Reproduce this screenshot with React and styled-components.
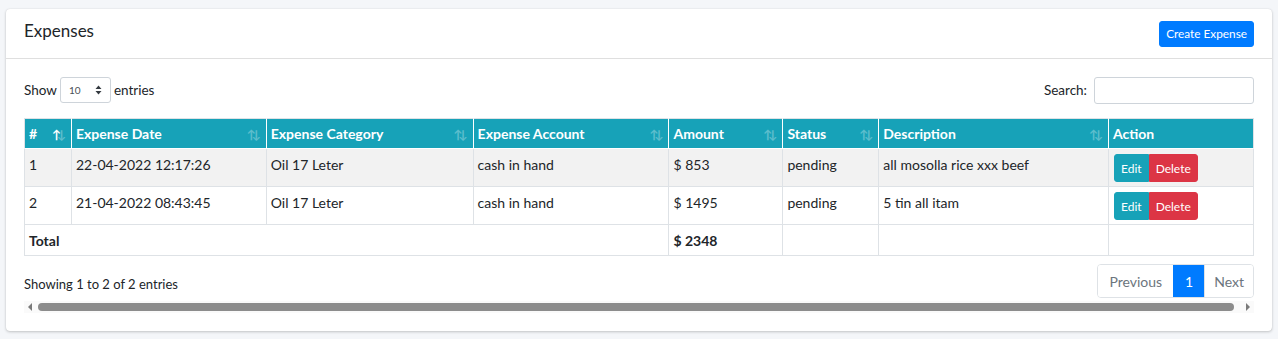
import React from "react";
import styled, { createGlobalStyle } from "styled-components";

const Global = createGlobalStyle`
  html, body { margin: 0; padding: 0; background: #f4f6f9; }
  body { font-family: Lato, "Noto Sans", sans-serif; color: #212529; font-size: 14px; }
  * { box-sizing: border-box; }
`;

const Page = styled.div`
  padding: 9px 6px 8px 6px;
`;

const Card = styled.div`
  background: #fff;
  border-radius: 4px;
  box-shadow: 0 0 1px rgba(0,0,0,.125), 0 1px 3px rgba(0,0,0,.2);
`;

const CardHeader = styled.div`
  height: 50px;
  display: flex;
  align-items: center;
  justify-content: space-between;
  padding: 0 18px;
  border-bottom: 1px solid rgba(0,0,0,.125);
`;

const Title = styled.h3`
  margin: 0;
  font-size: 17px;
  font-weight: 400;
  color: #212529;
  position: relative;
  top: -3px;
`;

const PrimaryButton = styled.button`
  background: #007bff;
  color: #fff;
  border: 1px solid #007bff;
  border-radius: 3px;
  height: 26px;
  padding: 0 6px;
  font-family: inherit;
  font-size: 11.8px;
`;

const CardBody = styled.div`
  padding: 18px 18px 18px 18px;
`;

const TopBar = styled.div`
  display: flex;
  justify-content: space-between;
  align-items: center;
  height: 26px;
  margin-bottom: 15px;
`;

const Label = styled.label`
  display: flex;
  align-items: center;
  gap: ${p => p.$gap || 4}px;
  font-size: 13.5px;
`;

const SelectBox = styled.div`
  width: 51px;
  height: 26px;
  border: 1px solid #ced4da;
  border-radius: 3px;
  display: flex;
  align-items: center;
  justify-content: space-between;
  padding: 0 8px 0 8px;
  font-size: 10px;
  color: #495057;
`;

const SearchInput = styled.div`
  width: 160px;
  height: 27px;
  border: 1px solid #ced4da;
  border-radius: 3px;
  margin-left: 3px;
`;

const Table = styled.table`
  width: 100%;
  border-collapse: collapse;
  border: 1px solid #dee2e6;
  font-size: 14px;
`;

const Th = styled.th`
  background: #17a2b8;
  color: #fff;
  text-align: left;
  font-weight: 700;
  padding: 0 4px;
  height: 30px;
  width: ${p => p.$w}px;
  border: 1px solid rgba(255,255,255,.6);
  border-top-color: #dee2e6;
  position: relative;
  white-space: nowrap;
  &:first-child { border-left-color: #dee2e6; }
  &:last-child { border-right-color: #dee2e6; }
`;

const SortIcon = styled.span`
  position: absolute;
  right: 9px;
  top: 50%;
  transform: translateY(-50%);
  font-size: 12px;
  letter-spacing: -4px;
  font-weight: 700;
  color: #fff;
  & > span { opacity: 0.3; }
  & > span.on { opacity: 1; }
`;

const Tr = styled.tr`
  background: ${p => (p.$striped ? "#f2f2f2" : "#fff")};
`;

const Td = styled.td`
  border: 1px solid #dee2e6;
  padding: 5px 4px 4px 4px;
  vertical-align: top;
  height: ${p => (p.$total ? 30 : 38)}px;
  color: #212529;
  font-weight: ${p => (p.$bold ? 700 : 400)};
  line-height: 21px;
`;

const BtnGroup = styled.div`
  display: inline-flex;
  margin-left: 1px;
`;

const SmallBtn = styled.button`
  background: ${p => p.$bg};
  border: 1px solid ${p => p.$bg};
  color: #fff;
  height: 28px;
  padding: 0 ${p => p.$px}px;
  font-family: inherit;
  font-size: 12px;
  border-radius: ${p => (p.$first ? "3px 0 0 3px" : "0 3px 3px 0")};
`;

const BottomBar = styled.div`
  display: flex;
  justify-content: space-between;
  align-items: center;
  margin-top: 8px;
  height: 34px;
`;

const Info = styled.div`
  font-size: 13px;
  padding-top: 6px;
`;

const Pagination = styled.div`
  display: flex;
  border: 1px solid #dee2e6;
  border-radius: 4px;
  overflow: hidden;
  height: 34px;
`;

const PageItem = styled.div`
  display: flex;
  align-items: center;
  padding: 0 ${p => p.$px}px;
  font-size: 14px;
  color: ${p => (p.$active ? "#fff" : "#6c757d")};
  background: ${p => (p.$active ? "#007bff" : "#fff")};
  border-left: ${p => (p.$first ? "none" : "1px solid #dee2e6")};
  ${p => p.$active && "border-left-color: #007bff;"}
`;

const Scrollbar = styled.div`
  display: flex;
  align-items: center;
  height: 12px;
  margin-top: 3px;
  padding: 0 4px;
  gap: 6px;
  background: #fafafa;
`;

const Arrow = styled.div`
  width: 0;
  height: 0;
  border-top: 4px solid transparent;
  border-bottom: 4px solid transparent;
  ${p => (p.$dir === "left" ? "border-right: 4px solid #7a7a7a;" : "border-left: 4px solid #7a7a7a;")}
`;

const Thumb = styled.div`
  flex: 1;
  height: 8px;
  border-radius: 4px;
  background: #8c8c8c;
  margin-right: 6px;
`;

const cols = [
  { label: "#", w: 47, sort: "asc" },
  { label: "Expense Date", w: 195, sort: "both" },
  { label: "Expense Category", w: 207, sort: "both" },
  { label: "Expense Account", w: 196, sort: "both" },
  { label: "Amount", w: 114, sort: "both" },
  { label: "Status", w: 96, sort: "both" },
  { label: "Description", w: 230, sort: "both" },
  { label: "Action", w: 145, sort: null },
];

const rows = [
  ["1", "22-04-2022 12:17:26", "Oil 17 Leter", "cash in hand", "$ 853", "pending", "all mosolla rice xxx beef"],
  ["2", "21-04-2022 08:43:45", "Oil 17 Leter", "cash in hand", "$ 1495", "pending", "5 tin all itam"],
];

export default function App() {
  return (
    <>
      <Global />
      <Page>
        <Card>
          <CardHeader>
            <Title>Expenses</Title>
            <PrimaryButton>Create Expense</PrimaryButton>
          </CardHeader>
          <CardBody>
            <TopBar>
              <Label $gap={3}>
                Show
                <SelectBox>
                  <span>10</span>
                  <svg width="7" height="10" viewBox="0 0 7 10">
                    <path d="M3.5 0.5 L6.5 4 H0.5 Z M3.5 9.5 L6.5 6 H0.5 Z" fill="#343a40" />
                  </svg>
                </SelectBox>
                entries
              </Label>
              <Label>
                Search:
                <SearchInput />
              </Label>
            </TopBar>
            <Table>
              <thead>
                <tr>
                  {cols.map(c => (
                    <Th key={c.label} $w={c.w}>
                      {c.label}
                      {c.sort && (
                        <SortIcon>
                          <span className={c.sort === "asc" ? "on" : ""}>↑</span>
                          <span>↓</span>
                        </SortIcon>
                      )}
                    </Th>
                  ))}
                </tr>
              </thead>
              <tbody>
                {rows.map((r, i) => (
                  <Tr key={r[0]} $striped={i === 0}>
                    {r.map((v, j) => (
                      <Td key={j}>{v}</Td>
                    ))}
                    <Td>
                      <BtnGroup>
                        <SmallBtn $bg="#17a2b8" $px={6} $first>Edit</SmallBtn>
                        <SmallBtn $bg="#dc3545" $px={6}>Delete</SmallBtn>
                      </BtnGroup>
                    </Td>
                  </Tr>
                ))}
                <Tr>
                  <Td colSpan={4} $bold $total>Total</Td>
                  <Td $bold $total>$ 2348</Td>
                  <Td $total />
                  <Td $total />
                  <Td $total />
                </Tr>
              </tbody>
            </Table>
            <BottomBar>
              <Info>Showing 1 to 2 of 2 entries</Info>
              <Pagination>
                <PageItem $first $px={11}>Previous</PageItem>
                <PageItem $active $px={11}>1</PageItem>
                <PageItem $px={9}>Next</PageItem>
              </Pagination>
            </BottomBar>
            <Scrollbar>
              <Arrow $dir="left" />
              <Thumb />
              <Arrow $dir="right" />
            </Scrollbar>
          </CardBody>
        </Card>
      </Page>
    </>
  );
}
